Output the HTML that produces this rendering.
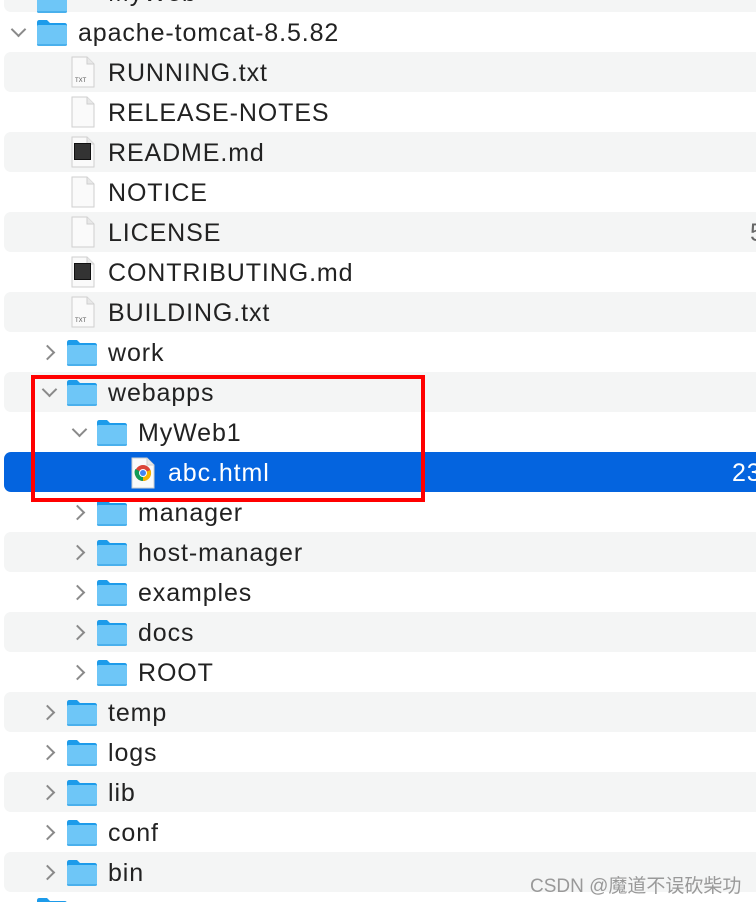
<!DOCTYPE html>
<html><head><meta charset="utf-8"><style>
html,body{margin:0;width:756px;height:902px;overflow:hidden}
body{background:#fff;font-family:"Liberation Sans",Arial,sans-serif;position:relative}
.r{position:absolute;left:4px;right:-10px;height:40px;border-radius:7px}
.g{background:#f4f5f5}
.sel{background:#0464df}
.t{position:absolute;font-size:25px;letter-spacing:0.9px;color:#222;line-height:42px;white-space:nowrap}
.ch{position:absolute;width:9px;height:9px;border-right:2px solid #8a8a8a;border-bottom:2px solid #8a8a8a}
.dn{transform:rotate(45deg)}
.rt{transform:rotate(-45deg)}
svg{position:absolute}
</style></head><body>
<svg width="0" height="0"><defs>
<symbol id="f" viewBox="0 0 32 28"><path d="M1 3.5Q1 1 3.5 1H11L14 4H28.5Q31 4 31 6.5V9H1Z" fill="#1d9bea"/><path d="M1 7.5Q1 6 2.5 6H29.5Q31 6 31 7.5V25Q31 27 29 27H3Q1 27 1 25Z" fill="#6ec6f7"/><path d="M1 25H31V25.5Q31 27 29 27H3Q1 27 1 25.5Z" fill="#4ab0ec"/></symbol>
<symbol id="d" viewBox="0 0 26 32"><path d="M2 1H17L24 8V31H2Z" fill="#fafafa" stroke="#cfcfcf"/><path d="M17 1V8H24" fill="#e8e8e8" stroke="#cfcfcf"/></symbol>
</defs></svg>

<div class="r g" style="top:-28px"></div>
<div class="r g" style="top:52px"></div>
<div class="r g" style="top:132px"></div>
<div class="r g" style="top:212px"></div>
<div class="r g" style="top:292px"></div>
<div class="r g" style="top:372px"></div>
<div class="r sel" style="top:452px"></div>
<div class="r g" style="top:532px"></div>
<div class="r g" style="top:612px"></div>
<div class="r g" style="top:692px"></div>
<div class="r g" style="top:772px"></div>
<div class="r g" style="top:852px"></div>

<svg style="left:36px;top:-14px" width="32" height="28"><use href="#f"/></svg>
<div class="t" style="left:108px;top:-28px">MyWeb</div>

<div class="ch dn" style="left:13px;top:24px"></div>
<svg style="left:36px;top:19px" width="32" height="28"><use href="#f"/></svg>
<div class="t" style="left:78px;top:12px">apache-tomcat-8.5.82</div>

<svg style="left:70px;top:56px" width="26" height="32"><use href="#d"/></svg><div style="position:absolute;left:75px;top:78px;font-size:6px;color:#555">TXT</div>
<div class="t" style="left:108px;top:52px">RUNNING.txt</div>
<svg style="left:70px;top:96px" width="26" height="32"><use href="#d"/></svg>
<div class="t" style="left:108px;top:92px">RELEASE-NOTES</div>
<svg style="left:70px;top:136px" width="26" height="32"><use href="#d"/></svg><div style="position:absolute;left:74px;top:143px;width:15px;height:15px;background:#333;border:1px solid #111"></div>
<div class="t" style="left:108px;top:132px">README.md</div>
<svg style="left:70px;top:176px" width="26" height="32"><use href="#d"/></svg>
<div class="t" style="left:108px;top:172px">NOTICE</div>
<svg style="left:70px;top:216px" width="26" height="32"><use href="#d"/></svg>
<div class="t" style="left:108px;top:212px">LICENSE</div>
<div class="t" style="left:750px;top:212px;color:#666">5</div>
<svg style="left:70px;top:256px" width="26" height="32"><use href="#d"/></svg><div style="position:absolute;left:74px;top:263px;width:15px;height:15px;background:#333;border:1px solid #111"></div>
<div class="t" style="left:108px;top:252px">CONTRIBUTING.md</div>
<svg style="left:70px;top:296px" width="26" height="32"><use href="#d"/></svg><div style="position:absolute;left:75px;top:318px;font-size:6px;color:#555">TXT</div>
<div class="t" style="left:108px;top:292px">BUILDING.txt</div>

<div class="ch rt" style="left:42px;top:347px"></div>
<svg style="left:66px;top:339px" width="32" height="28"><use href="#f"/></svg>
<div class="t" style="left:108px;top:332px">work</div>

<div class="ch dn" style="left:44px;top:384px"></div>
<svg style="left:66px;top:379px" width="32" height="28"><use href="#f"/></svg>
<div class="t" style="left:108px;top:372px">webapps</div>

<div class="ch dn" style="left:74px;top:424px"></div>
<svg style="left:96px;top:419px" width="32" height="28"><use href="#f"/></svg>
<div class="t" style="left:138px;top:412px">MyWeb1</div>

<svg style="left:130px;top:457px" width="26" height="32"><use href="#d"/></svg>
<svg style="left:133px;top:463px" width="20" height="20" viewBox="0 0 20 20"><circle cx="10" cy="10" r="8" fill="#db4437"/><path d="M10 10L2.5 13A8 8 0 0 0 10 18Z" fill="#0f9d58"/><path d="M10 10L2.5 13A8 8 0 0 1 2.3 6Z" fill="#0f9d58"/><path d="M10 10L10 18A8 8 0 0 0 17.5 7Z" fill="#f4b400"/><circle cx="10" cy="10" r="4" fill="#fff"/><circle cx="10" cy="10" r="3" fill="#4285f4"/></svg>
<div class="t" style="left:168px;top:452px;color:#fff">abc.html</div>
<div class="t" style="left:732px;top:452px;color:#fff">23</div>

<div class="ch rt" style="left:72px;top:507px"></div>
<svg style="left:96px;top:499px" width="32" height="28"><use href="#f"/></svg>
<div class="t" style="left:138px;top:492px">manager</div>
<div class="ch rt" style="left:72px;top:547px"></div>
<svg style="left:96px;top:539px" width="32" height="28"><use href="#f"/></svg>
<div class="t" style="left:138px;top:532px">host-manager</div>
<div class="ch rt" style="left:72px;top:587px"></div>
<svg style="left:96px;top:579px" width="32" height="28"><use href="#f"/></svg>
<div class="t" style="left:138px;top:572px">examples</div>
<div class="ch rt" style="left:72px;top:627px"></div>
<svg style="left:96px;top:619px" width="32" height="28"><use href="#f"/></svg>
<div class="t" style="left:138px;top:612px">docs</div>
<div class="ch rt" style="left:72px;top:667px"></div>
<svg style="left:96px;top:659px" width="32" height="28"><use href="#f"/></svg>
<div class="t" style="left:138px;top:652px">ROOT</div>

<div class="ch rt" style="left:42px;top:707px"></div>
<svg style="left:66px;top:699px" width="32" height="28"><use href="#f"/></svg>
<div class="t" style="left:108px;top:692px">temp</div>
<div class="ch rt" style="left:42px;top:747px"></div>
<svg style="left:66px;top:739px" width="32" height="28"><use href="#f"/></svg>
<div class="t" style="left:108px;top:732px">logs</div>
<div class="ch rt" style="left:42px;top:787px"></div>
<svg style="left:66px;top:779px" width="32" height="28"><use href="#f"/></svg>
<div class="t" style="left:108px;top:772px">lib</div>
<div class="ch rt" style="left:42px;top:827px"></div>
<svg style="left:66px;top:819px" width="32" height="28"><use href="#f"/></svg>
<div class="t" style="left:108px;top:812px">conf</div>
<div class="ch rt" style="left:42px;top:867px"></div>
<svg style="left:66px;top:859px" width="32" height="28"><use href="#f"/></svg>
<div class="t" style="left:108px;top:852px">bin</div>
<svg style="left:36px;top:897px" width="32" height="28"><use href="#f"/></svg>

<div style="position:absolute;left:31px;top:375px;width:386px;height:119px;border:4px solid #f00"></div>
<div style="position:absolute;left:530px;top:871px;font-size:19px;color:#999;font-family:'Liberation Sans','Noto Sans CJK SC',sans-serif;white-space:nowrap">CSDN @魔道不误砍柴功</div>
</body></html>
